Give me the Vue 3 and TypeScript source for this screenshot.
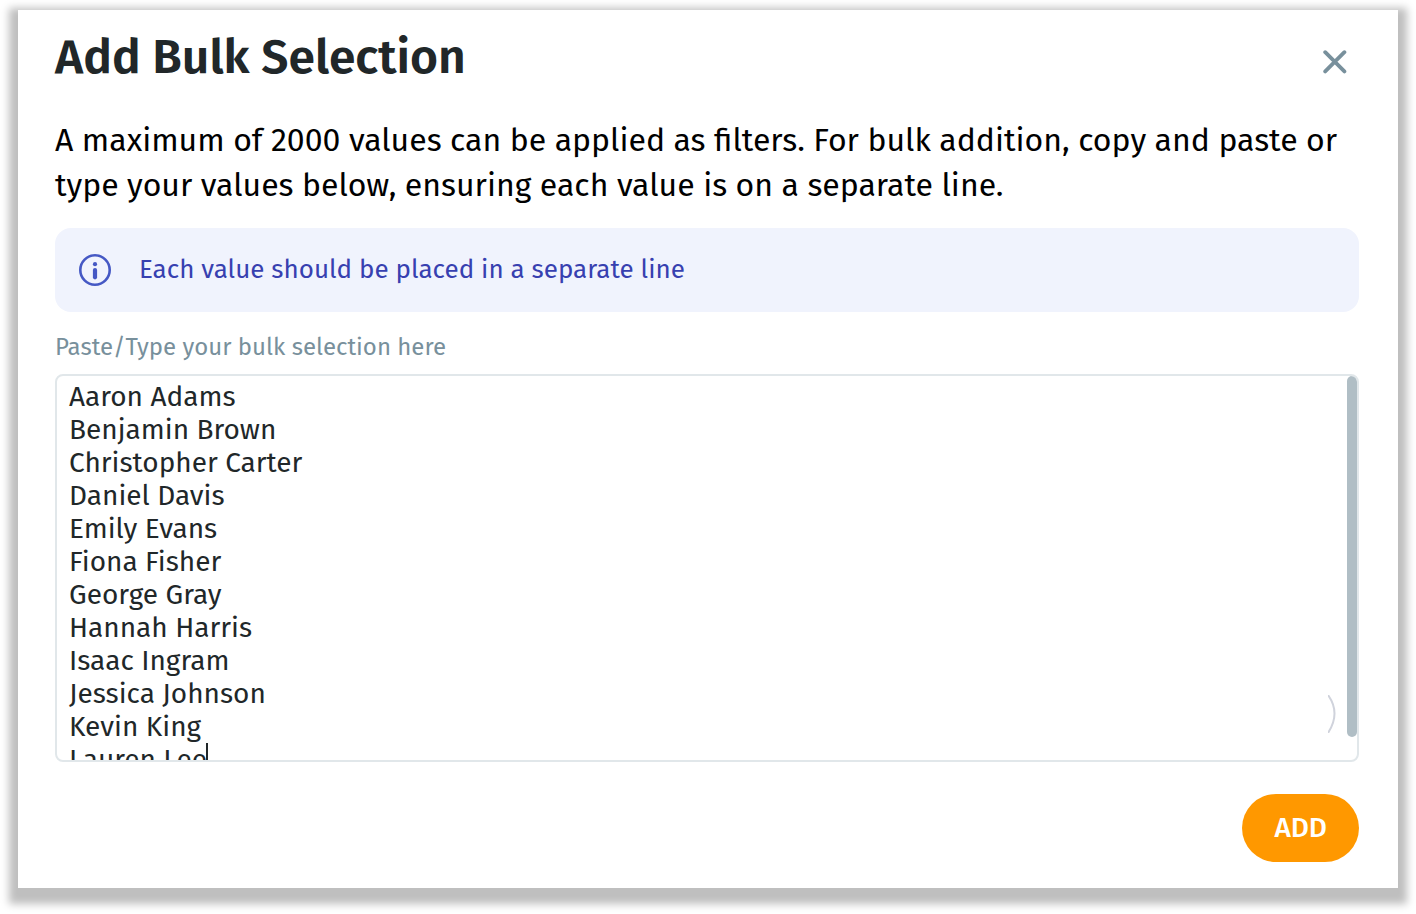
<script setup lang="ts">
import { onMounted, ref } from 'vue'

const names = [
  'Aaron Adams',
  'Benjamin Brown',
  'Christopher Carter',
  'Daniel Davis',
  'Emily Evans',
  'Fiona Fisher',
  'George Gray',
  'Hannah Harris',
  'Isaac Ingram',
  'Jessica Johnson',
  'Kevin King',
  'Lauren Lee',
]

const open = ref(true)
const values = ref(names.join('\n'))
const box = ref<HTMLTextAreaElement | null>(null)

onMounted(() => {
  if (box.value) box.value.scrollTop = 0
})
</script>

<template>
  <section v-if="open" class="dialog" role="dialog" aria-labelledby="dialog-title">
    <header class="head">
      <h1 id="dialog-title">Add Bulk Selection</h1>
      <button class="close" type="button" aria-label="Close" @click="open = false">
        <svg viewBox="0 0 24 24" width="24" height="24" aria-hidden="true">
          <path d="M2.2 2.2L21.4 21.4M21.4 2.2L2.2 21.4" />
        </svg>
      </button>
    </header>

    <p class="intro">
      A maximum of 2000 values can be applied as filters. For bulk addition, copy and paste or type
      your values below, ensuring each value is on a separate line.
    </p>

    <div class="note">
      <svg viewBox="0 0 32 32" width="32" height="32" aria-hidden="true">
        <circle class="ring" cx="16" cy="16" r="14.7" />
        <circle cx="16" cy="10.2" r="2.1" />
        <rect x="13.9" y="14" width="4.2" height="11.4" rx="2.1" />
      </svg>
      <span>Each value should be placed in a separate line</span>
    </div>

    <label class="label" for="bulk-values">Paste/Type your bulk selection here</label>
    <div class="field">
      <textarea id="bulk-values" ref="box" v-model="values" spellcheck="false"></textarea>
      <span class="caret" aria-hidden="true"></span>
      <svg class="arc" viewBox="0 0 8 38" width="8" height="38" aria-hidden="true">
        <path d="M0 0Q13 18 0 38" />
      </svg>
      <span class="thumb" aria-hidden="true"></span>
    </div>

    <footer class="foot">
      <button class="add" type="button">ADD</button>
    </footer>
  </section>
</template>

<style>
body {
  background: #fff;
}
</style>

<style scoped>
.dialog {
  margin: 10px 18px 26px;
  padding: 18px 39px 26px 37px;
  background: #fff;
  box-shadow: 0 7px 8px 9px #bfbfbf;
  font-family: 'Fira Sans', 'Noto Sans', sans-serif;
  color: #212729;
}
.head {
  display: flex;
  justify-content: space-between;
  align-items: flex-end;
}
h1 {
  margin: 0;
  font-size: 48px;
  line-height: 58px;
  font-weight: 600;
}
.close {
  display: flex;
  margin: 0;
  padding: 12px;
  border: 0;
  background: none;
  cursor: pointer;
}
.close path {
  fill: none;
  stroke: #78909c;
  stroke-width: 3.8;
  stroke-linecap: round;
}
.intro {
  margin: 32px 0 20px;
  font-size: 32px;
  line-height: 45px;
  color: #000;
}
.note {
  display: flex;
  align-items: center;
  gap: 28px;
  padding: 24px;
  border-radius: 16px;
  background: #f0f3fd;
  color: #3740b0;
  font-size: 26px;
  line-height: 36px;
}
.note svg {
  flex: none;
  fill: #4558c4;
}
.note .ring {
  fill: none;
  stroke: #4558c4;
  stroke-width: 2.6;
}
.label {
  display: block;
  margin: 20px 0 12px;
  font-size: 24px;
  line-height: 30px;
  color: #78909c;
}
.field {
  position: relative;
  height: 384px;
  border: 2px solid #e1e7ea;
  border-radius: 8px;
  overflow: hidden;
}
textarea {
  display: block;
  box-sizing: border-box;
  width: 100%;
  height: 100%;
  margin: 0;
  padding: 4px 24px 8px 12px;
  border: 0;
  outline: 0;
  resize: none;
  background: none;
  font: 28px/33px 'Fira Sans', 'Noto Sans', sans-serif;
  color: #212729;
  scrollbar-width: none;
}
.caret {
  position: absolute;
  left: 149px;
  top: 367px;
  width: 2px;
  height: 33px;
  background: #212729;
}
.arc {
  position: absolute;
  right: 21px;
  bottom: 27px;
  fill: none;
  stroke: #d0d3dc;
  stroke-width: 2;
}
.thumb {
  position: absolute;
  top: 0;
  right: 0;
  width: 10px;
  height: 94%;
  border-radius: 5px;
  background: #b0bec5;
}
.foot {
  display: flex;
  justify-content: flex-end;
  margin-top: 32px;
}
.add {
  padding: 16px 32px;
  border: 0;
  border-radius: 34px;
  background: #ff9800;
  color: #fff;
  font: 500 28px/36px 'Fira Sans', 'Noto Sans', sans-serif;
  cursor: pointer;
}
</style>
